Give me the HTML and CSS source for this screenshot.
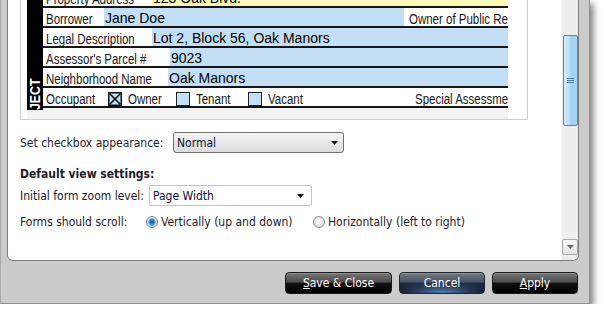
FILE: index.html
```html
<!DOCTYPE html>
<html lang="en">
<head>
    <meta charset="UTF-8">
    <meta name="viewport" content="width=device-width, initial-scale=1.0">
    <title>Form Settings</title>
    <link rel="stylesheet" href="styles.css">
</head>
<body>
    <div class="window">
        <div class="panel">
            <div class="content">
                <div class="preview">
                    <div class="sheet-clip">
                        <div class="sheet">
                            <div class="side-bar"><span class="nar-v">SUBJECT</span></div>
                            <div class="rows">
                                <div class="row">
                                    <span class="lbl lbl-long"><span class="nar">Property Address</span></span>
                                    <span class="field yellow">123 Oak Blvd.</span>
                                </div>
                                <div class="row">
                                    <span class="lbl lbl-short"><span class="nar">Borrower</span></span>
                                    <span class="field blue field-borrower">Jane Doe</span>
                                    <span class="lbl lbl-aside"><span class="nar">Owner of Public Record</span></span>
                                </div>
                                <div class="row">
                                    <span class="lbl lbl-long"><span class="nar">Legal Description</span></span>
                                    <span class="field blue">Lot 2, Block 56, Oak Manors</span>
                                </div>
                                <div class="row">
                                    <span class="lbl lbl-parcel"><span class="nar">Assessor's Parcel #</span></span>
                                    <span class="field blue">9023</span>
                                </div>
                                <div class="row">
                                    <span class="lbl lbl-hood"><span class="nar">Neighborhood Name</span></span>
                                    <span class="field blue">Oak Manors</span>
                                </div>
                                <div class="row">
                                    <span class="lbl lbl-occ"><span class="nar">Occupant</span></span>
                                    <span class="opt opt-owner">
                                        <svg class="chk" width="14" height="14" viewBox="0 0 14 14"><rect x="0.75" y="0.75" width="12.5" height="12.5" fill="#c3dff5" stroke="#111" stroke-width="1.5"/><path d="M1.5 1.5L12.5 12.5M12.5 1.5L1.5 12.5" stroke="#111" stroke-width="1.6"/></svg>
                                        <span class="lbl"><span class="nar">Owner</span></span>
                                    </span>
                                    <span class="opt opt-tenant">
                                        <svg class="chk" width="14" height="14" viewBox="0 0 14 14"><rect x="0.5" y="0.5" width="13" height="13" fill="#c3dff5" stroke="#222"/></svg>
                                        <span class="lbl"><span class="nar">Tenant</span></span>
                                    </span>
                                    <span class="opt opt-vacant">
                                        <svg class="chk" width="14" height="14" viewBox="0 0 14 14"><rect x="0.5" y="0.5" width="13" height="13" fill="#c3dff5" stroke="#222"/></svg>
                                        <span class="lbl"><span class="nar">Vacant</span></span>
                                    </span>
                                    <span class="lbl"><span class="nar">Special Assessments</span></span>
                                </div>
                            </div>
                        </div>
                    </div>
                </div>

                <div class="settings">
                    <div class="set-row">
                        <span class="set-label label-appearance">Set checkbox appearance:</span>
                        <div class="select select-gray">
                            <span>Normal</span>
                            <svg width="7" height="4" viewBox="0 0 7 4"><path d="M0 0h7L3.5 4z" fill="#111"/></svg>
                        </div>
                    </div>
                    <div class="set-heading">Default view settings:</div>
                    <div class="set-row">
                        <span class="set-label label-zoom">Initial form zoom level:</span>
                        <div class="select select-white">
                            <span>Page Width</span>
                            <svg width="7" height="4" viewBox="0 0 7 4"><path d="M0 0h7L3.5 4z" fill="#111"/></svg>
                        </div>
                    </div>
                    <div class="set-row scroll-row">
                        <span class="set-label label-scroll">Forms should scroll:</span>
                        <span class="radio-opt radio-first"><span class="radio checked"></span>Vertically (up and down)</span>
                        <span class="radio-opt"><span class="radio"></span>Horizontally (left to right)</span>
                    </div>
                </div>
            </div>

            <div class="scrollbar">
                <div class="thumb">
                    <svg width="7" height="6" viewBox="0 0 7 6"><path d="M0 .5h7M0 2.5h7M0 4.5h7" stroke="#4d7fa6" stroke-width="1"/></svg>
                </div>
                <div class="track-space"></div>
                <div class="arrow-down">
                    <svg width="7" height="4" viewBox="0 0 7 4"><path d="M0 0h7L3.5 4z" fill="#6a6a6a"/></svg>
                </div>
            </div>
        </div>

        <div class="actions">
            <button class="btn btn-save"><u>S</u>ave &amp; Close</button>
            <button class="btn btn-cancel">Cancel</button>
            <button class="btn btn-apply"><u>A</u>pply</button>
        </div>
    </div>
</body>
</html>
```

FILE: styles.css
```css
body {
    margin: 0;
    background: #fff;
    font-family: "DejaVu Sans Condensed", "DejaVu Sans", sans-serif;
    font-stretch: semi-condensed;
    font-size: 12px;
    color: #1b1b2b;
}
.window {
    width: 588px;
    height: 303px;
    background: #cbcbcb;
    border-left: 1px solid #a9a9a9;
    border-right: 1px solid #8e8e8e;
    border-bottom: 1px solid #8e8e8e;
    box-shadow: 4px 4px 6px rgba(0, 0, 0, 0.45);
}
.panel {
    display: flex;
    margin-left: 6px;
    width: 570px;
    height: 260px;
    background: #fff;
    border: 1px solid #7d7d7d;
    border-top: none;
    border-radius: 0 0 6px 6px;
    overflow: hidden;
}
.content {
    flex: 1;
    overflow: hidden;
}

/* form preview */
.preview {
    margin-left: 12px;
    width: 500px;
    padding: 0 0 0 6px;
    border: 1px solid #cfcfcf;
    border-top: none;
    background: #fff;
}
.sheet-clip {
    width: 481px;
    height: 119px;
    overflow: hidden;
    background: #f3f3f3;
}
.sheet {
    display: flex;
    align-items: flex-start;
    margin-top: -12px;
    height: 122px;
    overflow: hidden;
}
.side-bar {
    flex: none;
    width: 16px;
    height: 150px;
    box-sizing: border-box;
    padding-top: 2px;
    background: #000;
    color: #fff;
    font-family: "Liberation Sans", Arial, sans-serif;
    font-weight: bold;
    font-size: 15px;
    line-height: 16px;
    writing-mode: vertical-rl;
    transform: rotate(180deg);
}
.nar-v {
    display: inline-block;
    transform: scaleY(0.82);
    transform-origin: 50% 0;
}
.rows {
    width: 465px;
    background: #fff;
}
.row {
    display: flex;
    height: 20px;
    box-sizing: border-box;
    border-bottom: 2px solid #151515;
    white-space: nowrap;
    overflow: hidden;
}
.lbl {
    flex: none;
    font-family: "Liberation Sans", Arial, sans-serif;
    font-size: 14px;
    line-height: 22px;
    color: #161616;
}
.nar {
    display: inline-block;
    transform: scaleX(0.82);
    transform-origin: 0 50%;
}
.lbl-long, .lbl-short, .lbl-parcel, .lbl-hood, .lbl-occ {
    box-sizing: border-box;
    padding-left: 3px;
}
.lbl-long { width: 109px; }
.lbl-short { width: 61px; }
.lbl-parcel { width: 127px; }
.lbl-hood { width: 125px; }
.lbl-occ { width: 65px; }
.lbl-aside { padding-left: 5px; }
.field {
    flex: 1;
    height: 18px;
    padding-left: 1px;
    font-family: "Liberation Sans", Arial, sans-serif;
    font-size: 14px;
    line-height: 20px;
    color: #000;
}
.field-borrower {
    flex: none;
    width: 299px;
}
.yellow { background: #fcf9b6; }
.blue { background: #c3dff5; }
.opt {
    flex: none;
    display: flex;
    gap: 6px;
}
.opt-owner { width: 68px; }
.opt-tenant { width: 72px; }
.opt-vacant { width: 167px; }
.chk {
    flex: none;
    margin-top: 4px;
}

/* settings */
.settings {
    padding-left: 12px;
}
.set-row {
    display: flex;
    align-items: center;
    white-space: nowrap;
}
.set-row:first-child {
    margin-top: 12px;
}
.set-label {
    flex: none;
}
.label-appearance { width: 153px; }
.label-zoom { width: 129px; }
.label-scroll { width: 126px; }
.set-heading {
    margin-top: 14px;
    font-weight: bold;
    line-height: 14px;
}
.set-heading + .set-row {
    margin-top: 4px;
}
.select {
    display: flex;
    align-items: center;
    justify-content: space-between;
    box-sizing: border-box;
    height: 21px;
    padding-left: 3px;
    color: #0d0d3d;
}
.select-gray {
    width: 171px;
    padding-right: 5px;
    border: 1px solid #707070;
    border-radius: 3px;
    background: linear-gradient(#f4f4f4, #dcdcdc);
}
.select-white {
    width: 163px;
    padding-right: 7px;
    border: 1px solid #c4c4c4;
    border-radius: 2px;
    background: #fff;
}
.scroll-row {
    margin-top: 8px;
    height: 16px;
}
.radio-opt {
    display: flex;
    align-items: center;
    gap: 3px;
}
.radio-first {
    width: 167px;
}
.radio {
    width: 12px;
    height: 12px;
    box-sizing: border-box;
    border-radius: 50%;
    border: 1px solid #8f8f8f;
    background: radial-gradient(circle at 50% 40%, #fafafa 0, #e2e2e2 60%, #cfcfcf 100%);
}
.radio.checked {
    border-color: #6b8aa6;
    background: radial-gradient(circle, #0f4f82 0, #2a78b5 2px, #7fb6e0 3.5px, #dfe8ef 4.5px, #c9d3dc 100%);
}

/* scrollbar */
.scrollbar {
    display: flex;
    flex-direction: column;
    width: 16px;
    background: #ededed;
    border-left: 1px solid #f8f8f8;
}
.thumb {
    display: flex;
    align-items: center;
    justify-content: center;
    margin: 35px 0 0 1px;
    width: 15px;
    height: 91px;
    box-sizing: border-box;
    border: 1px solid #4f87b6;
    border-radius: 2px;
    background: linear-gradient(90deg, #d8eefb, #b3dcf5 45%, #9fd1f1 55%, #a9d6f2);
}
.track-space {
    flex: 1;
}
.arrow-down {
    display: flex;
    align-items: center;
    justify-content: center;
    width: 16px;
    height: 16px;
    margin-bottom: 5px;
    box-sizing: border-box;
    border: 1px solid #a7a7a7;
    border-radius: 2px;
    background: linear-gradient(#f7f7f7, #e1e1e1);
}

/* buttons */
.actions {
    display: flex;
    justify-content: flex-end;
    gap: 7px;
    padding: 11px 11px 0 0;
}
.btn {
    height: 22px;
    box-sizing: border-box;
    padding: 0;
    border: 1px solid #1a1a1a;
    border-radius: 4px;
    color: #fff;
    font-family: inherit;
    font-stretch: semi-condensed;
    font-size: 12px;
    background: linear-gradient(#767676 0%, #4c4c4c 45%, #111 52%, #000 100%);
    box-shadow: inset 0 1px 0 rgba(255, 255, 255, 0.2);
    cursor: pointer;
}
.btn-save { width: 107px; }
.btn-cancel {
    width: 86px;
    border-color: #1f2733;
    background:
        radial-gradient(ellipse 60% 70% at 50% 100%, rgba(95, 135, 180, 0.9), rgba(60, 95, 140, 0.4) 60%, transparent 100%),
        linear-gradient(#737a84 0%, #4a5463 45%, #1c2636 52%, #0e1624 100%);
}
.btn-apply { width: 86px; }
```
